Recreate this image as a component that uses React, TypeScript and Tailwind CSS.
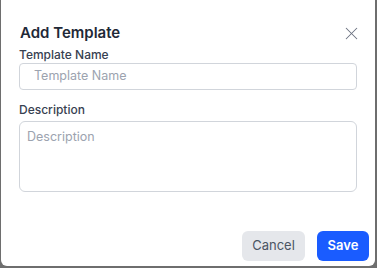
import { X } from 'lucide-react';

export default function App() {
  return (
    <div
      className="w-[377px] h-[268px] bg-[#6e6e6e] pl-px pr-[2px] pb-[2px] overflow-hidden"
      style={{ fontFamily: 'Inter, "Liberation Sans", sans-serif' }}
    >
      <div className="h-full bg-white rounded-b-md flex flex-col">
        {/* Header */}
        <div className="h-[20px] mt-[23px] flex items-center justify-between pl-[19px] pr-[13px]">
          <h2 className="text-[15px] leading-5 font-semibold text-[#1f2937]">Add Template</h2>
          <button className="text-[#6b7280]">
            <X size={21} strokeWidth={1.2} />
          </button>
        </div>

        {/* Body */}
        <div className="px-[18px] pt-[4px]">
          <label className="block text-[12px] leading-4 font-medium text-[#374151]">
            Template Name
          </label>
          <div className="h-[27px] border border-[#d1d5db] rounded-[4px] flex items-center pl-[14px] text-[12.5px] text-[#9ca3af]">
            Template Name
          </div>

          <label className="block text-[12px] leading-4 font-medium text-[#374151] mt-[12px] mb-[3px]">
            Description
          </label>
          <div className="h-[71px] border border-[#d1d5db] rounded-[6px] pl-[7px] pt-[7px] text-[12.5px] leading-4 text-[#9ca3af]">
            Description
          </div>
        </div>

        {/* Footer */}
        <div className="mt-auto flex justify-end gap-[12px] pr-[6px] pb-[5px]">
          <button className="w-[63px] h-[30px] rounded-[6px] bg-[#e5e7eb] text-[13px] text-[#4b5563]">
            Cancel
          </button>
          <button className="w-[52px] h-[30px] rounded-[6px] bg-[#1a5cff] text-[13px] font-semibold text-white">
            Save
          </button>
        </div>
      </div>
    </div>
  );
}
